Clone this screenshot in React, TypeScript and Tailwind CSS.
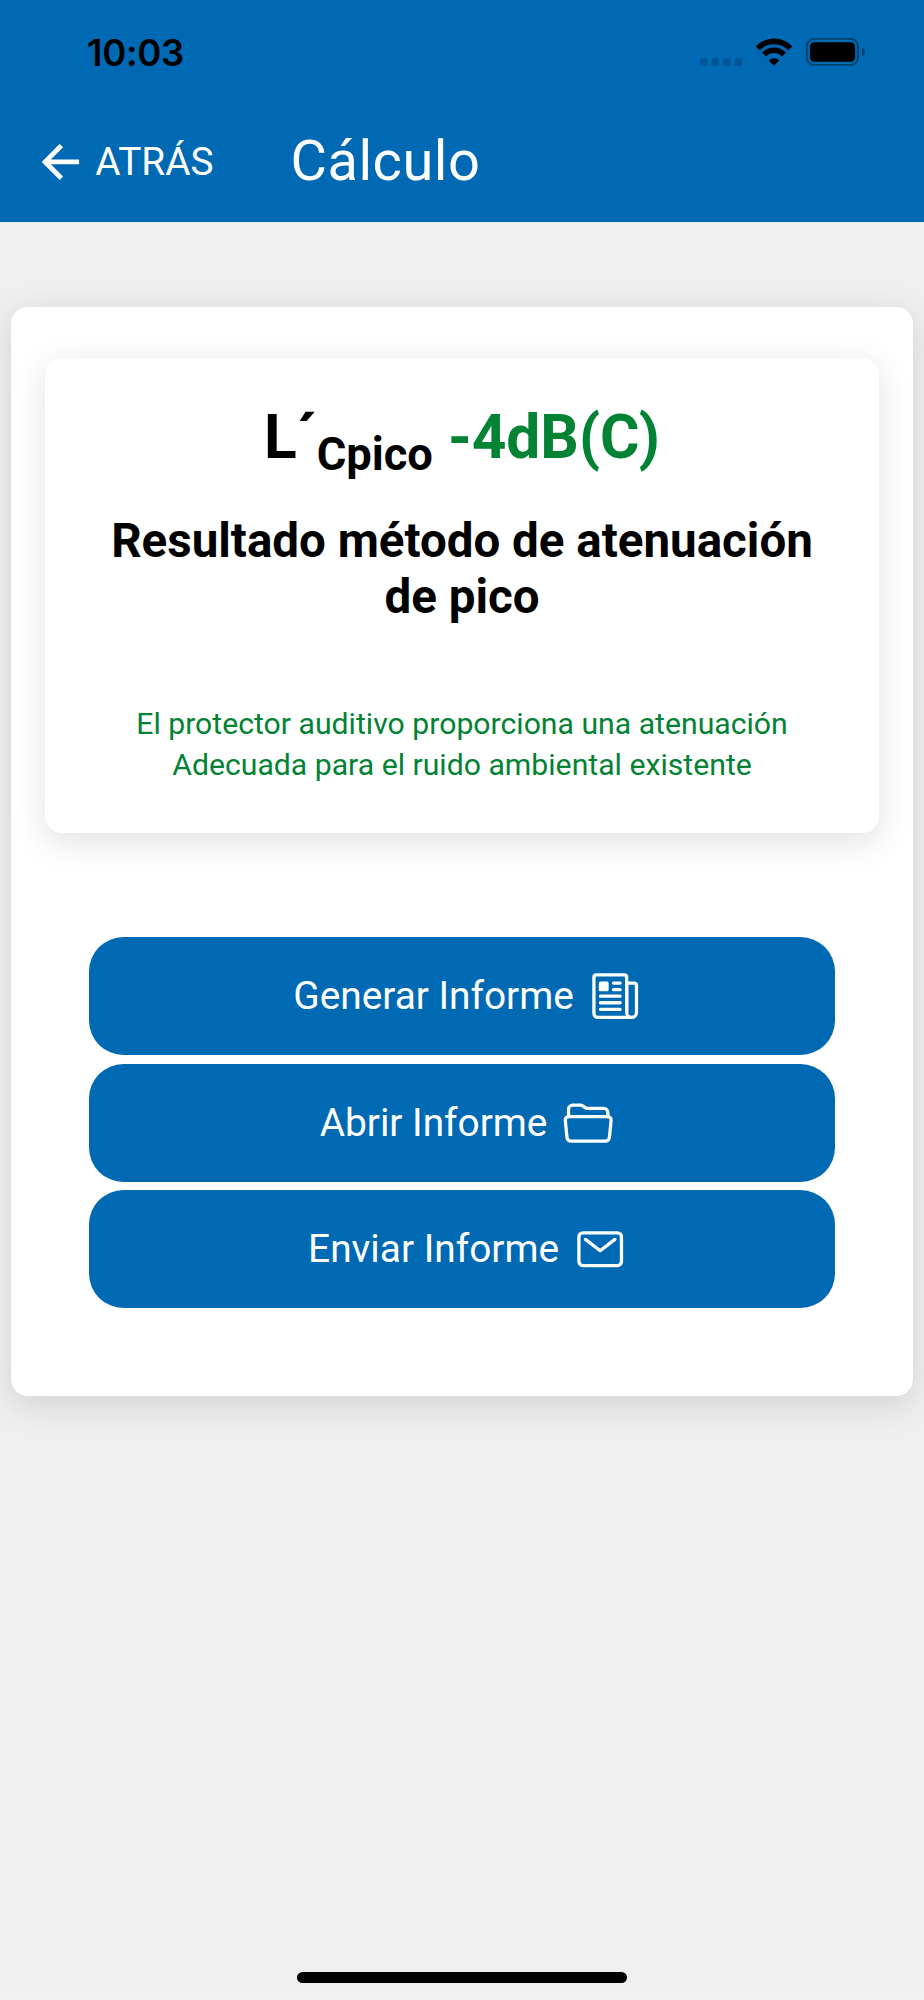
import type { ReactNode } from 'react';
import { IoArrowBackSharp, IoFolderOpenOutline, IoMailOutline, IoNewspaperOutline } from 'react-icons/io5';

function StatusBar() {
  return (
    <div className="flex h-[101px] items-start justify-between pr-[59px] pl-[87px]">
      <span className="mt-[31px] font-['Inter'] text-[36.5px] leading-[44px] font-semibold tracking-[-0.3px] text-black">
        10:03
      </span>
      <svg className="mt-[36px] h-8 w-[166px]" viewBox="0 0 166 32" fill="none">
        <g fill="#005596">
          <rect x="1" y="22" width="7.6" height="8" rx="2.6" />
          <rect x="12.5" y="22" width="7.6" height="8" rx="2.6" />
          <rect x="24" y="22" width="7.6" height="8" rx="2.6" />
          <rect x="35.5" y="22" width="7.6" height="8" rx="2.6" />
        </g>
        <g stroke="#000" strokeWidth="5.6">
          <path d="M58.8 12.4a22.3 22.3 0 0 1 32.4 0" />
          <path d="M65 18.5a13.8 13.8 0 0 1 20 0" />
        </g>
        <path d="M75 29.8l-5.3-5.3a7.6 7.6 0 0 1 10.6 0z" fill="#000" />
        <rect x="107.8" y="2.9" width="51.2" height="26" rx="7.4" stroke="#00406e" strokeWidth="1.9" />
        <rect x="110.9" y="6.3" width="45.2" height="19.4" rx="4.4" fill="#000" />
        <path d="M163 11.9c1.9.8 3 2.3 3 4.2s-1.1 3.4-3 4.2z" fill="#00406e" />
      </svg>
    </div>
  );
}

function Toolbar() {
  return (
    <div className="flex h-[121px] items-center pl-[34.5px] text-white">
      <button className="flex items-center gap-[9px] text-[38.8px] leading-none">
        <IoArrowBackSharp className="size-[51.8px]" />
        <span className="pt-0.5">ATRÁS</span>
      </button>
      <h1 className="ml-[77px] pb-px text-[56px] leading-none tracking-[0.5px]">Cálculo</h1>
    </div>
  );
}

function ReportButton({ label, icon }: { label: string; icon: ReactNode }) {
  return (
    <button className="flex h-[117.8px] w-full items-center justify-center rounded-[34.5px] bg-[#0069b4] text-[38.8px] leading-none text-white">
      <span className="pt-px">{label}</span>
      <span className="-mr-[10.5px] ml-[15px] text-[52.4px]">{icon}</span>
    </button>
  );
}

export default function App() {
  return (
    <div className="flex h-[2000px] w-[924px] flex-col bg-[#efefef] font-['Roboto',sans-serif]">
      <header className="bg-[#0069b4]">
        <StatusBar />
        <Toolbar />
      </header>

      <main className="flex-1 px-[11px] pt-[84.7px]">
        <section className="h-[1089.8px] rounded-[17px] bg-white px-[34px] pt-[51.8px] shadow-[0_8.6px_34.5px_rgba(0,0,0,0.12)]">
          <div className="h-[475px] rounded-[17px] bg-white px-[34px] text-center shadow-[0_8.6px_34.5px_rgba(0,0,0,0.12)]">
            <h2 className="pt-[43.5px] text-[60.4px] leading-[72px] font-bold text-black">
              L´<sub className="-bottom-[0.27em]">Cpico</sub> <span className="text-[#028233]">-4dB(C)</span>
            </h2>
            <h3 className="mt-[39px] text-[47.5px] leading-[56px] font-bold text-black">
              Resultado método de atenuación
              <br />
              de pico
            </h3>
            <p className="mt-[78px] text-[30.2px] leading-[41.4px] text-[#028233]">
              El protector auditivo proporciona una atenuación
              <br />
              Adecuada para el ruido ambiental existente
            </p>
          </div>

          <div className="mx-[43.7px] mt-[104px] flex flex-col gap-[8.6px]">
            <ReportButton label="Generar Informe" icon={<IoNewspaperOutline />} />
            <ReportButton label="Abrir Informe" icon={<IoFolderOpenOutline />} />
            <ReportButton label="Enviar Informe" icon={<IoMailOutline />} />
          </div>
        </section>
      </main>

      <footer className="flex flex-col items-center">
        <div className="h-[11.2px] w-[330.6px] rounded-full bg-black" />
        <div className="mt-[9px] h-2 w-full bg-[#f2f2f2]" />
      </footer>
    </div>
  );
}
